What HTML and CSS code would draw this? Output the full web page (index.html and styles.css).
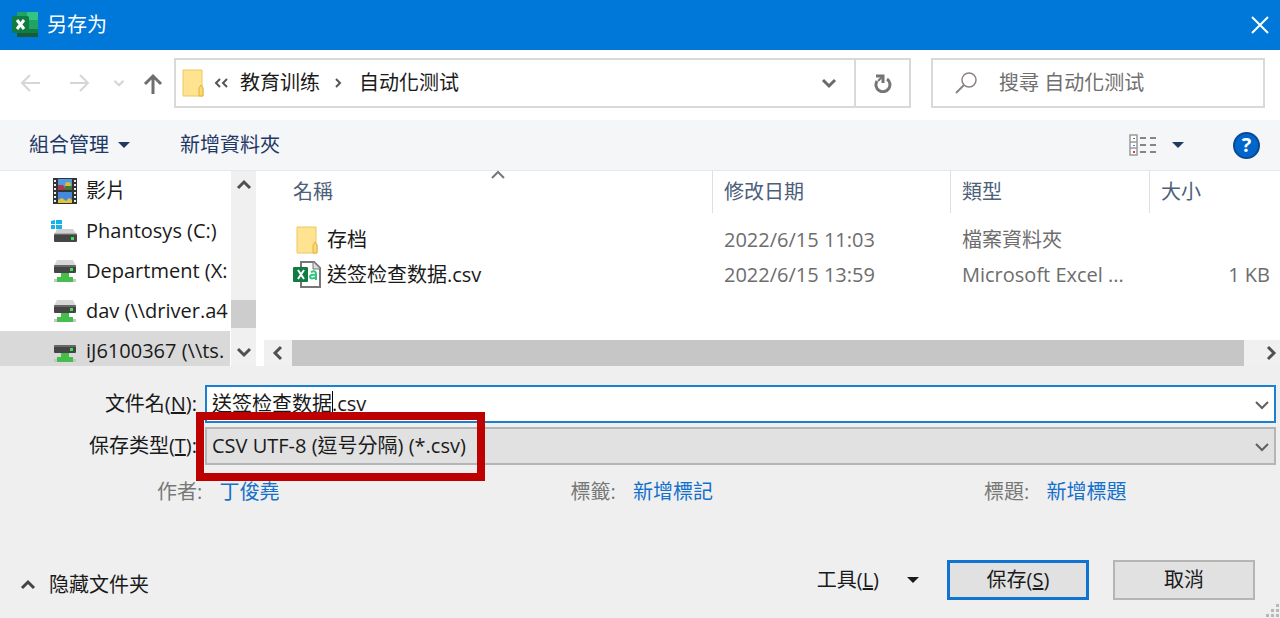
FILE: index.html
```
<!DOCTYPE html>
<html lang="zh-Hant">

<head>
  <meta charset="UTF-8" />
  <title>另存为</title>
  <meta name="viewport" content="width=device-width, initial-scale=1.0" />
  <link rel="stylesheet" href="styles.css">
</head>

<body>
  <svg class="defs" aria-hidden="true">
    <symbol id="folder" viewBox="0 0 22 28">
      <path d="M1 1h19v16l1 2v8H1z" fill="#ffe391" stroke="#ecc75a" />
      <path d="M17 27v-8l2-3 2 3v8z" fill="#fbd970" stroke="#ddb647" />
    </symbol>
    <symbol id="net-drive" viewBox="0 0 24 24">
      <path d="M4 1h16l3 6H1z" fill="#d8d8d8" />
      <rect x="1" y="6" width="22" height="8" rx="1" fill="#454545" />
      <path d="M1 7h22" stroke="#8b8b8b" />
      <rect x="17" y="9" width="3" height="3" fill="#37e457" />
      <path d="M1 20h22v3H1z" fill="#c3c7c3" />
      <path d="M8 14h8v4h4v5H4v-5h4z" fill="#47bd4c" />
    </symbol>
    <symbol id="down" viewBox="0 0 16 16">
      <path d="M2 5l6 6 6-6" fill="none" stroke="currentColor" stroke-width="2" />
    </symbol>
    <symbol id="chevron" viewBox="0 0 16 16">
      <path d="M2 5l6 6 6-6" fill="none" stroke="currentColor" stroke-width="3" />
    </symbol>
    <symbol id="triangle" viewBox="0 0 12 8">
      <path d="M0 1h12L6 7z" fill="currentColor" />
    </symbol>
  </svg>

  <header class="titlebar">
    <svg class="app-icon" viewBox="0 0 28 28">
      <path d="M6 1h10v8H6z" fill="#21a366" />
      <path d="M16 1h11v8H16z" fill="#33c481" />
      <path d="M6 9h10v9H6z" fill="#107c41" />
      <path d="M16 9h11v9H16z" fill="#21a366" />
      <path d="M6 18h21v8H6z" fill="#185c37" />
      <path d="M16 18h11v4H16z" fill="#107c41" />
      <rect x="1" y="5" width="17" height="17" rx="2" fill="#107c41" />
      <path d="M6 9l7 9M13 9l-7 9" stroke="#fff" stroke-width="3" />
    </svg>
    <h1>另存为</h1>
    <button class="close" aria-label="关闭">
      <svg viewBox="0 0 18 18"><path d="M1 1l16 16M17 1L1 17" stroke="currentColor" stroke-width="2" /></svg>
    </button>
  </header>

  <nav class="navbar">
    <button class="arrow" disabled aria-label="上一頁">
      <svg viewBox="0 0 22 22"><path d="M20 11H2M10 3l-8 8 8 8" fill="none" stroke="currentColor" stroke-width="2" /></svg>
    </button>
    <button class="arrow forward" disabled aria-label="下一頁">
      <svg viewBox="0 0 22 22"><path d="M1 11h18M11 3l8 8-8 8" fill="none" stroke="currentColor" stroke-width="2" /></svg>
    </button>
    <button class="recent" disabled aria-label="最近"><svg viewBox="0 0 16 16"><use href="#chevron" /></svg></button>
    <button class="arrow up" aria-label="上一層">
      <svg viewBox="0 0 22 22"><path d="M11 22V4M3 12l8-8 8 8" fill="none" stroke="currentColor" stroke-width="3" /></svg>
    </button>
    <div class="address">
      <svg class="folder"><use href="#folder" /></svg>
      <svg class="more" viewBox="0 0 14 10"><path d="M6 1L2 5l4 4M13 1L9 5l4 4" fill="none" stroke="currentColor" stroke-width="2" /></svg>
      <button class="crumb">教育训练</button>
      <svg class="sep" viewBox="0 0 10 12"><path d="M2 2l4 4-4 4" fill="none" stroke="currentColor" stroke-width="2" /></svg>
      <button class="crumb">自动化测试</button>
      <button class="history" aria-label="先前位置"><svg viewBox="0 0 16 16"><use href="#chevron" /></svg></button>
      <button class="refresh" aria-label="重新整理">
        <svg viewBox="0 0 20 20">
          <path d="M14 6a7 7 0 1 1-10 2" fill="none" stroke="currentColor" stroke-width="3" />
          <path d="M3 3h7v7" fill="none" stroke="currentColor" stroke-width="3" />
          <path d="M10 3L5 8" stroke="currentColor" stroke-width="2" />
        </svg>
      </button>
    </div>
    <div class="search">
      <svg viewBox="0 0 22 22">
        <circle cx="14" cy="8" r="7" fill="none" stroke="currentColor" stroke-width="1.5" />
        <path d="M9 13l-8 8" stroke="currentColor" stroke-width="2" />
      </svg>
      <input type="text" placeholder="搜尋 自动化测试" aria-label="搜尋" />
    </div>
  </nav>

  <div class="toolbar">
    <button>組合管理 <svg class="tri"><use href="#triangle" /></svg></button>
    <button class="new-folder">新增資料夾</button>
    <button class="view" aria-label="檢視">
      <svg class="view-icon" viewBox="0 0 28 22">
        <path d="M1 1h7v20H1zM1 8h7M1 14h7" fill="#fff" stroke="#999" stroke-width="1.5" />
        <path d="M11 4h6m4 0h6M11 11h6m4 0h6M11 18h6m4 0h6" stroke="#858585" stroke-width="2" />
        <path d="M4 4h2v1H4z" fill="#3a9a4a" />
        <path d="M4 11h2v1H4z" fill="#3b82e0" />
        <path d="M4 17h2v2H4z" fill="#e03b3b" />
      </svg>
      <svg class="tri"><use href="#triangle" /></svg>
    </button>
    <button class="help" aria-label="說明">?</button>
  </div>

  <main class="browser">
    <aside class="sidebar">
      <ul class="tree">
        <li>
          <svg viewBox="0 0 24 26">
            <rect width="24" height="26" fill="#333" />
            <path d="M2 2v24M22 2v24" stroke="#eee" stroke-width="2" stroke-dasharray="2 2" />
            <path d="M5 1h14v11H5z" fill="#4f9be8" />
            <path d="M5 14h14v11H5z" fill="#4589dd" />
            <path d="M5 7h5l3 5H5z" fill="#a93a4a" />
            <circle cx="15" cy="7" r="3" fill="#e5b92e" />
            <path d="M5 25v-3l4-2 4 3 3-3 3 2v3z" fill="#e4c33c" />
            <path d="M12 12V8h7v4z" fill="#3b7b3b" />
          </svg>
          <span>影片</span>
        </li>
        <li>
          <svg class="disk" viewBox="0 0 26 24">
            <path d="M0 2l4-1v4H0zM5 1h6v4H5zM0 6h4v4H0zM5 6h6v5l-6-1z" fill="#16b1e8" />
            <path d="M6 10h16l4 6H3z" fill="#d0d0d0" />
            <rect x="3" y="15" width="23" height="8" rx="1" fill="#454545" />
            <path d="M3 15h23" stroke="#8b8b8b" />
            <rect x="20" y="18" width="3" height="3" fill="#37e457" />
          </svg>
          <span>Phantosys (C:)</span>
        </li>
        <li><svg><use href="#net-drive" /></svg><span>Department (X:</span></li>
        <li><svg><use href="#net-drive" /></svg><span>dav (\\driver.a4</span></li>
        <li class="selected"><svg><use href="#net-drive" /></svg><span>iJ6100367 (\\ts.</span></li>
      </ul>
      <div class="vscroll">
        <button class="flip" aria-label="向上"><svg viewBox="0 0 16 16"><use href="#chevron" /></svg></button>
        <div class="thumb"></div>
        <button aria-label="向下"><svg viewBox="0 0 16 16"><use href="#chevron" /></svg></button>
      </div>
    </aside>

    <section class="files">
      <table>
        <thead>
          <tr>
            <th class="name">名稱
              <svg class="sort" viewBox="0 0 16 16"><use href="#down" /></svg>
            </th>
            <th class="date">修改日期</th>
            <th class="type">類型</th>
            <th class="size">大小</th>
          </tr>
        </thead>
        <tbody>
          <tr>
            <td><div class="file"><svg><use href="#folder" /></svg><span>存档</span></div></td>
            <td>2022/6/15 11:03</td>
            <td>檔案資料夾</td>
            <td></td>
          </tr>
          <tr>
            <td>
              <div class="file">
                <svg viewBox="0 0 28 28">
                  <path d="M8 1h13l6 6v19H8z" fill="#fff" stroke="#777" stroke-width="2" />
                  <path d="M20 1v7h7" fill="#ddd" stroke="#777" />
                  <rect x="0" y="6" width="15" height="15" rx="1" fill="#107c41" />
                  <path d="M5 9l6 9M11 9l-6 9" stroke="#fff" stroke-width="2" />
                  <path d="M18 11q5-2 5 2v6M23 14q-6-1-6 2 1 3 6 0" fill="none" stroke="#33c481" stroke-width="2" />
                </svg>
                <span>送签检查数据.csv</span>
              </div>
            </td>
            <td>2022/6/15 13:59</td>
            <td>Microsoft Excel ...</td>
            <td>1 KB</td>
          </tr>
        </tbody>
      </table>
      <div class="hscroll">
        <button class="left" aria-label="向左"><svg viewBox="0 0 16 16"><use href="#chevron" /></svg></button>
        <div class="thumb"></div>
        <button class="right" aria-label="向右"><svg viewBox="0 0 16 16"><use href="#chevron" /></svg></button>
      </div>
    </section>
  </main>

  <form class="save-form">
    <div class="fields">
      <label for="filename">文件名(<u>N</u>):</label>
      <div class="field">
        <input id="filename" type="text" value="送签检查数据.csv" />
        <span class="caret"></span>
        <svg viewBox="0 0 16 16"><use href="#down" /></svg>
      </div>
      <label for="filetype">保存类型(<u>T</u>):</label>
      <div class="field">
        <select id="filetype">
          <option>CSV UTF-8 (逗号分隔) (*.csv)</option>
        </select>
        <svg viewBox="0 0 16 16"><use href="#down" /></svg>
        <div class="highlight"></div>
      </div>
    </div>

    <div class="meta">
      <div>作者: <a href="#">丁俊堯</a></div>
      <div>標籤: <a href="#">新增標記</a></div>
      <div>標題: <a href="#">新增標題</a></div>
    </div>

    <footer class="actions">
      <button type="button" class="plain hide"><svg viewBox="0 0 16 16"><use href="#chevron" /></svg>隐藏文件夹</button>
      <button type="button" class="plain tools"><span>工具(<u>L</u>)</span><svg class="tri"><use href="#triangle" /></svg></button>
      <button type="button" class="btn primary">保存(<u>S</u>)</button>
      <button type="button" class="btn">取消</button>
    </footer>
    <svg class="grip" viewBox="0 0 14 14">
      <path d="M10 0h3v3h-3zM5 5h3v3H5zM10 5h3v3h-3zM0 10h3v3H0zM5 10h3v3H5zM10 10h3v3h-3z" fill="#b8b8b8" />
    </svg>
  </form>
</body>

</html>
```
FILE: styles.css
```
* {
  box-sizing: border-box;
}

body {
  margin: 0;
  height: 100vh;
  display: flex;
  flex-direction: column;
  background: #fff;
  font-family: 'Open Sans', 'Noto Sans CJK TC', sans-serif;
  font-size: 20px;
  line-height: 28px;
  color: #1a1a1a;
  overflow: hidden;
}

button,
input,
select {
  font: inherit;
  color: inherit;
  padding: 0;
  border: none;
  border-radius: 0;
  background: none;
}

svg {
  flex: none;
  display: block;
}

.defs {
  position: absolute;
  width: 0;
  height: 0;
}

.tri {
  width: 12px;
  height: 8px;
}

/* title bar */
.titlebar {
  display: flex;
  align-items: center;
  height: 50px;
  padding: 0 11px;
  background: #0078d9;
  color: #fff;
}

.app-icon {
  width: 28px;
  height: 28px;
}

h1 {
  margin: 0 0 0 8px;
  font-size: 20px;
  font-weight: 400;
}

.close {
  margin-left: auto;
}

.close svg {
  width: 18px;
  height: 18px;
}

/* navigation */
.navbar {
  display: flex;
  align-items: center;
  height: 70px;
  padding: 0 15px 4px 20px;
}

.arrow svg {
  width: 22px;
  height: 22px;
}

.arrow,
.recent {
  color: #d6d6d6;
}

.forward {
  margin-left: 27px;
}

.recent {
  margin: 0 17px 0 22px;
}

.recent svg {
  width: 12px;
  height: 12px;
}

.up {
  color: #6e6e6e;
  margin-right: 10px;
}

.address,
.search {
  display: flex;
  align-items: center;
  height: 50px;
  border: 2px solid #d9d9d9;
}

.address {
  flex: 1;
  padding-left: 6px;
  margin-right: 20px;
}

.address .folder {
  width: 22px;
  height: 28px;
}

.more {
  width: 14px;
  height: 10px;
  margin: 0 12px 0 10px;
  color: #555;
}

.sep {
  width: 10px;
  height: 12px;
  margin: 0 15px 0 14px;
  color: #555;
}

.history {
  margin-left: auto;
  margin-right: 17px;
  color: #6a6a6a;
}

.history svg {
  width: 16px;
  height: 16px;
}

.refresh {
  display: flex;
  align-items: center;
  justify-content: center;
  align-self: stretch;
  width: 55px;
  border-left: 2px solid #d9d9d9;
  color: #757575;
}

.refresh svg {
  width: 20px;
  height: 20px;
}

.search {
  width: 334px;
  padding-left: 22px;
  color: #8d8088;
}

.search svg {
  width: 22px;
  height: 22px;
}

.search input {
  flex: 1;
  min-width: 0;
  margin-left: 22px;
}

.search input::placeholder {
  color: #6f6f6f;
  opacity: 1;
}

/* toolbar */
.toolbar {
  display: flex;
  align-items: center;
  height: 51px;
  padding: 0 20px 0 29px;
  background: #f4f6f8;
  border-bottom: 1px solid #e6e8ea;
  color: #1f3864;
}

.toolbar button {
  display: flex;
  align-items: center;
  gap: 9px;
}

.toolbar .new-folder {
  margin-left: 50px;
}

.toolbar .view {
  gap: 15px;
  margin-left: auto;
}

.view-icon {
  width: 28px;
  height: 22px;
}

.toolbar .help {
  justify-content: center;
  width: 27px;
  height: 27px;
  margin-left: 49px;
  border: 2px solid #0a4a94;
  border-radius: 50%;
  background: #0066cc;
  color: #fff;
  font-weight: 700;
}

/* folder tree and file list */
.browser {
  flex: 1;
  min-height: 0;
  display: flex;
}

.sidebar {
  display: flex;
  width: 256px;
  margin-right: 8px;
}

.tree {
  flex: 1;
  min-width: 0;
  margin: 0;
  padding: 0;
  list-style: none;
  overflow: hidden;
}

.tree li {
  display: flex;
  align-items: center;
  gap: 9px;
  height: 40px;
  padding-left: 53px;
  white-space: nowrap;
}

.tree svg {
  width: 24px;
  height: 26px;
}

.tree .disk {
  width: 26px;
  margin-left: -2px;
}

.tree .selected {
  background: #d9d9d9;
}

.vscroll,
.hscroll {
  display: flex;
  background: #f0f0f0;
  color: #505050;
}

.vscroll {
  flex-direction: column;
  width: 25px;
  margin-left: 1px;
}

.vscroll button,
.hscroll button {
  display: flex;
  align-items: center;
  justify-content: center;
  width: 25px;
  height: 28px;
}

.vscroll svg,
.hscroll svg {
  width: 16px;
  height: 16px;
}

.vscroll .thumb {
  height: 28px;
  margin: auto 0 10px;
  background: #cdcdcd;
}

.flip svg,
.sort,
.hide svg {
  transform: rotate(180deg);
}

.files {
  flex: 1;
  min-width: 0;
  display: flex;
  flex-direction: column;
}

table {
  width: 100%;
  table-layout: fixed;
  border-collapse: separate;
  border-spacing: 0;
}

th {
  position: relative;
  height: 42px;
  padding: 0 0 0 11px;
  border-left: 1px solid #e0e0e0;
  font-weight: 400;
  text-align: left;
  color: #4c607a;
}

th.name {
  padding-left: 29px;
  border-left: none;
}

th.date {
  width: 238px;
}

th.type {
  width: 199px;
}

th.size {
  width: 131px;
}

.sort {
  position: absolute;
  top: -4px;
  left: 226px;
  width: 16px;
  height: 16px;
  color: #777;
}

tbody::before {
  content: '';
  display: block;
  height: 9px;
}

td {
  height: 35px;
  padding: 0 0 0 12px;
  color: #6d6d6d;
  white-space: nowrap;
}

td:first-child {
  padding-left: 29px;
  color: #1a1a1a;
}

td:last-child {
  padding-right: 10px;
  text-align: right;
}

.file {
  display: flex;
  align-items: center;
  gap: 6px;
}

.file svg {
  width: 28px;
  height: 28px;
}

.hscroll {
  height: 26px;
  margin-top: auto;
}

.hscroll button {
  width: 28px;
  height: 26px;
}

.hscroll .thumb {
  flex: 1;
  background: #c6c6c6;
}

.hscroll .left svg {
  transform: rotate(90deg);
}

.hscroll .right {
  width: 36px;
  padding-left: 18px;
}

.hscroll .right svg {
  transform: rotate(-90deg);
}

/* file name, type and buttons */
.save-form {
  position: relative;
  padding: 19px 0 18px;
  background: #efefef;
}

.fields {
  display: grid;
  grid-template-columns: 197px 1fr;
  align-items: center;
  gap: 4px 8px;
  padding-right: 4px;
}

.fields label {
  text-align: right;
}

.field {
  position: relative;
}

.field input,
.field select {
  display: block;
  width: 100%;
  height: 38px;
  padding: 0 32px 2px 5px;
  border: 2px solid #1a80d4;
  background: #fff;
  appearance: none;
}

.field input {
  padding-bottom: 4px;
}

.field select {
  padding-bottom: 0;
  border-color: #b5b5b5;
  background: #e1e1e1;
}

.field svg {
  position: absolute;
  top: 12px;
  right: 6px;
  width: 16px;
  height: 16px;
  color: #606060;
  pointer-events: none;
}

.caret {
  position: absolute;
  top: 6px;
  left: 127px;
  width: 1px;
  height: 22px;
  background: #000;
}

.highlight {
  position: absolute;
  top: -15px;
  left: -9px;
  width: 289px;
  height: 69px;
  border: 8px solid #bd0000;
  pointer-events: none;
}

.meta {
  display: grid;
  grid-template-columns: 1fr 1fr 296px;
  margin-top: 13px;
  padding-left: 157px;
  color: #777;
}

.meta a {
  margin-left: 12px;
  color: #1470cc;
  text-decoration: none;
}

.actions {
  display: flex;
  align-items: center;
  margin-top: 54px;
  padding: 0 25px 0 20px;
}

.plain {
  display: flex;
  align-items: center;
}

.hide {
  gap: 13px;
  margin-right: auto;
  padding-top: 10px;
}

.hide svg {
  width: 16px;
  height: 16px;
  color: #444;
}

.tools {
  gap: 28px;
  margin-right: 28px;
}

.btn {
  width: 142px;
  height: 40px;
  border: 2px solid #b5b5b5;
  background: #e1e1e1;
}

.primary {
  margin-right: 24px;
  border: 3px solid #0f74d1;
}

.grip {
  position: absolute;
  right: 0;
  bottom: 0;
  width: 14px;
  height: 14px;
}
```
